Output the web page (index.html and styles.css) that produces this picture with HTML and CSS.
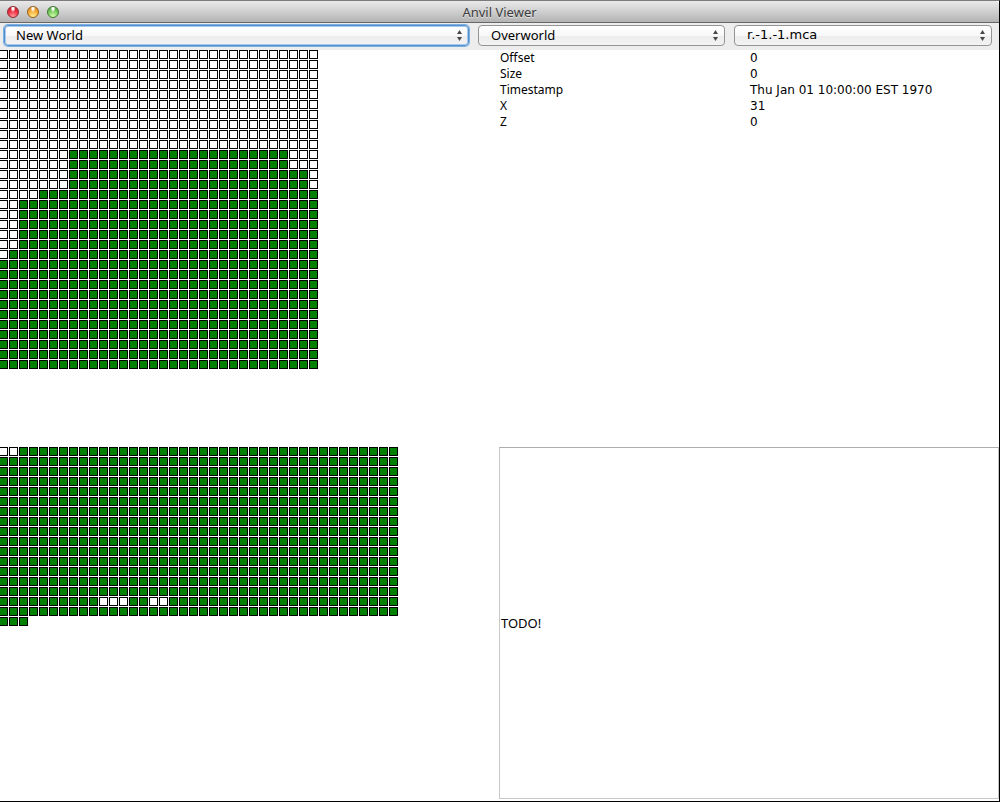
FILE: index.html
```
<!DOCTYPE html>
<html lang="en">
<head>
<meta charset="utf-8">
<title>Anvil Viewer</title>
<link rel="stylesheet" href="styles.css">
</head>
<body>
<div class="window">
  <header class="titlebar">
    <div class="lights">
      <button class="light close" aria-label="Close"></button>
      <button class="light minimize" aria-label="Minimize"></button>
      <button class="light zoom" aria-label="Zoom"></button>
    </div>
    <h1 class="title">Anvil Viewer</h1>
  </header>
  <div class="toolbar">
    <div class="picker world">
      <select class="select focused" aria-label="World"><option>New World</option></select>
      <svg class="arrows" viewBox="0 0 5 11" aria-hidden="true"><path d="M2.5 0 5 4H0zM0 7h5L2.500 11z"/></svg>
    </div>
    <div class="picker dimension">
      <select class="select" aria-label="Dimension"><option>Overworld</option></select>
      <svg class="arrows" viewBox="0 0 5 11" aria-hidden="true"><path d="M2.5 0 5 4H0zM0 7h5L2.500 11z"/></svg>
    </div>
    <div class="picker region">
      <select class="select numeric" aria-label="Region file"><option>r.-1.-1.mca</option></select>
      <svg class="arrows" viewBox="0 0 5 11" aria-hidden="true"><path d="M2.5 0 5 4H0zM0 7h5L2.500 11z"/></svg>
    </div>
  </div>
  <main class="content">
    <section class="map"><div class="cells chunks" id="chunks"></div></section>
    <section class="details">
      <table class="info">
        <tbody>
          <tr><th scope="row">Offset</th><td class="numeric">0</td></tr>
          <tr><th scope="row">Size</th><td class="numeric">0</td></tr>
          <tr><th scope="row">Timestamp</th><td class="numeric">Thu Jan 01 10:00:00 EST 1970</td></tr>
          <tr><th scope="row">X</th><td class="numeric">31</td></tr>
          <tr><th scope="row">Z</th><td class="numeric">0</td></tr>
        </tbody>
      </table>
    </section>
    <section class="map"><div class="cells sectors" id="sectors"></div></section>
    <section class="data">TODO!</section>
  </main>
</div>
<script src="app.js"></script>
</body>
</html>
```
FILE: styles.css
```
* { box-sizing: border-box; }

body {
  margin: 0;
  background: #000;
  color: #000;
  font: 12px/16px "Noto Sans", "Open Sans", sans-serif;
}

.window {
  display: flex;
  flex-direction: column;
  min-height: 100vh;
  border-top: 1px solid #7d7b7d;
  border-right: 1px solid #000;
  border-bottom: 1px solid #000;
  background: #fff;
}

.titlebar {
  display: grid;
  grid-template-columns: 1fr auto 1fr;
  align-items: center;
  height: 22px;
  border-bottom: 1px solid #686868;
  border-radius: 0 4px 0 0;
  background: linear-gradient(#e9e9e9, #d2d2d2 45%, #b3b3b3);
}

.lights { display: flex; gap: 8px; padding-left: 7px; }

.light {
  width: 12px;
  height: 12px;
  padding: 0;
  border: 1px solid;
  border-radius: 50%;
}

.close {
  border-color: #8d2b31;
  background: radial-gradient(ellipse at 50% 10%, #fff 0 12%, transparent 35%), radial-gradient(circle at 50% 95%, #ff9da0, #ef3547 50%, #bc1929);
}

.minimize {
  border-color: #94601d;
  background: radial-gradient(ellipse at 50% 10%, #fff 0 12%, transparent 35%), radial-gradient(circle at 50% 95%, #fff199, #f9b23a 50%, #cf7919);
}

.zoom {
  border-color: #3e782f;
  background: radial-gradient(ellipse at 50% 10%, #fff 0 12%, transparent 35%), radial-gradient(circle at 50% 95%, #d4ffac, #80cf66 50%, #429739);
}

.title {
  margin: 0;
  color: #3c3c3c;
  font-size: 13px;
  font-weight: 400;
  text-shadow: 0 1px 0 #e4e4e4;
}

.toolbar {
  display: flex;
  gap: 9px;
  height: 27px;
  padding: 2px 7px 4px 4px;
  background: #ededed;
}

.picker { position: relative; min-width: 0; }
.world { flex: 465; }
.dimension { flex: 247; }
.region { flex: 258; }

.select {
  display: block;
  width: 100%;
  height: 21px;
  padding: 0 24px 2px 12px;
  appearance: none;
  border: 1px solid #949494;
  border-radius: 4px;
  outline: none;
  background: linear-gradient(#fff, #f8f8f8 50%, #ececec 51%, #f3f3f3);
  color: #000;
  font: inherit;
  font-size: 13px;
}

.numeric { font-family: "DejaVu Sans", sans-serif; }

.focused {
  padding-left: 11px;
  border-color: #5590cc;
  box-shadow: 0 0 0 1px #79b0e3, inset 0 0 0 1px #a5caed;
}

.arrows {
  position: absolute;
  top: 5px;
  right: 7px;
  width: 5px;
  height: 11px;
  fill: #484848;
}

.content {
  display: grid;
  flex: 1;
  grid-template-columns: 499fr 500fr;
  grid-template-rows: 397fr 354fr;
}

.map { overflow: hidden; }

.cells {
  display: grid;
  grid-auto-rows: 9px;
  gap: 1px;
  margin-left: -1px;
}

.chunks { grid-template-columns: repeat(32, 9px); }
.sectors { grid-template-columns: repeat(40, 9px); }

.cell { border: 1px solid #000; background: #fff; }
.used { background: #008000; }

.info {
  width: 100%;
  table-layout: fixed;
  border-collapse: collapse;
}

.info th,
.info td {
  padding: 0 0 0 1px;
  font-weight: 400;
  text-align: left;
}

.data {
  display: flex;
  align-items: center;
  margin-bottom: 2px;
  padding-left: 1px;
  border: 1px solid #c8c8c8;
  border-top-color: #adadad;
  font-size: 13px;
}
```
FILE: app.js
```
function drawCells(id, cells) {
  const parent = document.getElementById(id);
  for (const used of cells) {
    const cell = document.createElement("div");
    cell.className = used ? "cell used" : "cell";
    parent.append(cell);
  }
}

// Each run: number of rows, first and last generated chunk in those rows.
const runs = [
  [10, 32, 31],
  [2, 7, 28],
  [2, 7, 30],
  [1, 4, 31],
  [5, 2, 31],
  [1, 1, 31],
  [11, 0, 31]
];

const chunks = [];
for (const [rows, first, last] of runs) {
  for (let z = 0; z < rows; z++) {
    for (let x = 0; x < 32; x++) chunks.push(x >= first && x <= last);
  }
}

const freeSectors = new Set([0, 1, 610, 611, 612, 615, 616]);
const sectors = Array.from({ length: 683 }, (_, i) => !freeSectors.has(i));

drawCells("chunks", chunks);
drawCells("sectors", sectors);
```
